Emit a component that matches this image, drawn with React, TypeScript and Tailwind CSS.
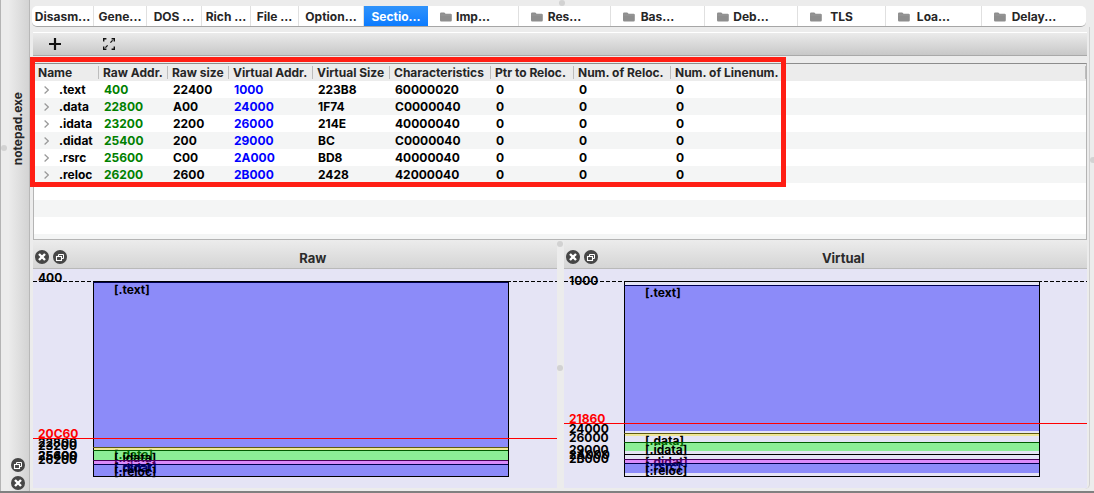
import React from "react";

type Tab = { label: string; folder?: boolean; active?: boolean };

const tabs: Tab[] = [
  { label: "Disasm..." },
  { label: "Gene..." },
  { label: "DOS ..." },
  { label: "Rich ..." },
  { label: "File ..." },
  { label: "Option..." },
  { label: "Sectio...", active: true },
  { label: "Imp...", folder: true },
  { label: "Res...", folder: true },
  { label: "Bas...", folder: true },
  { label: "Deb...", folder: true },
  { label: "TLS", folder: true },
  { label: "Loa...", folder: true },
  { label: "Delay...", folder: true },
];

const columns = [
  { title: "Name", width: "w-[65px]" },
  { title: "Raw Addr.", width: "w-[69px]" },
  { title: "Raw size", width: "w-[61px]" },
  { title: "Virtual Addr.", width: "w-[84px]" },
  { title: "Virtual Size", width: "w-[77px]" },
  { title: "Characteristics", width: "w-[101px]" },
  { title: "Ptr to Reloc.", width: "w-[83px]" },
  { title: "Num. of Reloc.", width: "w-[97px]" },
  { title: "Num. of Linenum.", width: "" },
];

const rows = [
  [".text", "400", "22400", "1000", "223B8", "60000020", "0", "0", "0"],
  [".data", "22800", "A00", "24000", "1F74", "C0000040", "0", "0", "0"],
  [".idata", "23200", "2200", "26000", "214E", "40000040", "0", "0", "0"],
  [".didat", "25400", "200", "29000", "BC", "C0000040", "0", "0", "0"],
  [".rsrc", "25600", "C00", "2A000", "BD8", "40000040", "0", "0", "0"],
  [".reloc", "26200", "2600", "2B000", "2428", "42000040", "0", "0", "0"],
];

const BLUE = "#0000ff";
const YELLOW = "#ffee00";
const GREEN = "#00ff00";
const MAGENTA = "#c800ff";

type Band = { name: string; address: string; y: number; size: number; color: string; line: string };

const rawBands: Band[] = [
  { name: ".text", address: "400", y: 13, size: 165, color: BLUE, line: "#000050" },
  { name: ".data", address: "22800", y: 178, size: 3, color: YELLOW, line: "#5f5a10" },
  { name: ".idata", address: "23200", y: 181, size: 10, color: GREEN, line: "#005a00" },
  { name: ".didat", address: "25400", y: 191, size: 1, color: BLUE, line: "#000050" },
  { name: ".rsrc", address: "25600", y: 191, size: 4, color: MAGENTA, line: "#46005a" },
  { name: ".reloc", address: "26200", y: 195, size: 12, color: BLUE, line: "#000050" },
];

const virtualBands: Band[] = [
  { name: ".text", address: "1000", y: 16, size: 146, color: BLUE, line: "#000050" },
  { name: ".data", address: "24000", y: 164, size: 3, color: YELLOW, line: "#5f5a10" },
  { name: ".idata", address: "26000", y: 173, size: 9, color: GREEN, line: "#005a00" },
  { name: ".didat", address: "29000", y: 185, size: 0, color: BLUE, line: "#000000" },
  { name: ".rsrc", address: "2A000", y: 190, size: 4, color: MAGENTA, line: "#46005a" },
  { name: ".reloc", address: "2B000", y: 194, size: 10, color: BLUE, line: "#000050" },
];

function FolderIcon() {
  return (
    <svg viewBox="0 0 12 10" className="h-[10px] w-3 shrink-0" aria-hidden="true">
      <path
        d="M0 1.8Q0 .6 1.2.6H4Q4.7.6 5.1 1.2L5.5 1.7H10.6Q11.8 1.7 11.8 2.9V8.2Q11.8 9.4 10.6 9.4H1.2Q0 9.4 0 8.2Z"
        fill="#8e8e8e"
      />
      <path d="M.4 3H11.4" stroke="#a3a3a3" strokeWidth=".6" />
    </svg>
  );
}

function CloseButton({ label }: { label: string }) {
  return (
    <button type="button" aria-label={label} className="block h-[14px] w-[14px]">
      <svg viewBox="0 0 14 14" className="h-[14px] w-[14px]">
        <circle cx="7" cy="7" r="7" fill="#464646" />
        <path d="M4 4 10 10M10 4 4 10" stroke="#fff" strokeWidth="2.4" />
      </svg>
    </button>
  );
}

function FloatButton({ label }: { label: string }) {
  return (
    <button type="button" aria-label={label} className="block h-[14px] w-[14px]">
      <svg viewBox="0 0 14 14" className="h-[14px] w-[14px]" fill="none">
        <circle cx="7" cy="7" r="7" fill="#464646" />
        <path d="M5.5 6V4.5H10.5V8.5H9" stroke="#fff" strokeWidth="1" />
        <rect x="3.5" y="6.5" width="5" height="4" stroke="#fff" strokeWidth="1.1" />
      </svg>
    </button>
  );
}

function Dot() {
  return <span className="block h-[6px] w-[6px] shrink-0 rounded-full bg-[#d2d2d2]" />;
}

function MemoryMap({
  title,
  bands,
  marker,
  markerY,
}: {
  title: string;
  bands: Band[];
  marker: string;
  markerY: number;
}) {
  return (
    <section className="flex min-w-0 flex-1 flex-col" aria-label={title}>
      <header className="flex h-[29px] items-center border-b border-[#b9b9b9] bg-linear-to-b from-[#ececec] to-[#d5d5d5] pt-[6px] pl-[2px]">
        <div className="flex w-[34px] gap-1">
          <CloseButton label={`Close ${title}`} />
          <FloatButton label={`Detach ${title}`} />
        </div>
        <h2 className="flex-1 pt-[2px] text-center text-[13px] leading-4 font-bold text-[#2b2b2b]">{title}</h2>
      </header>
      <svg
        className="block h-[219px] w-full bg-[#e5e4f5] text-[12px] font-bold"
        shapeRendering="crispEdges"
        role="img"
        aria-label={`${title} section layout`}
      >
        <line x1="0" x2="100%" y1="12.5" y2="12.5" stroke="#000" strokeDasharray="4 2" />
        <rect x="60.5" y="12.5" height="195" className="w-[calc(100%-109px)]" fill="#e5e4f5" stroke="#000" />
        {bands.map((b) => (
          <g key={b.name}>
            <rect x="61" y={b.y} height={b.size} className="w-[calc(100%-110px)]" fill={b.color} fillOpacity="0.39" />
            <rect x="60" y={b.y} height="1" className="w-[calc(100%-109px)]" fill={b.line} />
            <text x="81" y={b.y + 12} fill="#000">{`[${b.name}]`}</text>
            <text x="5" y={b.y} fill="#000">{b.address}</text>
          </g>
        ))}
        <line x1="0" x2="100%" y1={markerY + 0.5} y2={markerY + 0.5} stroke="#ff0000" />
        <text x="5" y={markerY} fill="#ff0000">{marker}</text>
      </svg>
    </section>
  );
}

function cellColor(column: number) {
  if (column === 1) return "text-[#008000]";
  if (column === 3) return "text-[#0000ff]";
  return "text-black";
}

export default function App() {
  return (
    <div className="flex min-h-screen border-b-2 border-[#808080] bg-[#ececec] font-['Inter','Liberation_Sans',sans-serif] text-[12px] font-bold text-[#262626]">
      <aside className="flex w-[30px] shrink-0 border-l border-[#b4b4b4]">
        <div className="flex w-2 flex-col pt-[145px]">
          <Dot />
        </div>
        <div className="flex flex-1 flex-col items-center border-r border-[#b8b8b8] bg-linear-to-r from-[#ebebeb] to-[#d3d3d3] pt-[92px] pr-[2px] pb-[1px]">
          <span className="rotate-180 text-[12px] leading-4 [writing-mode:vertical-rl]">notepad.exe</span>
          <div className="mt-auto flex flex-col gap-1">
            <FloatButton label="Detach notepad.exe" />
            <CloseButton label="Close notepad.exe" />
          </div>
        </div>
      </aside>

      <main className="flex min-w-0 flex-1 flex-col">
        <div className="flex h-[6px] justify-center">
          <Dot />
        </div>
        <nav
          role="tablist"
          className="mr-[8px] ml-[2px] grid h-[21px] grid-cols-[62fr_53fr_55fr_49fr_48fr_65fr_64fr_91fr_92fr_94fr_93fr_88fr_96fr_104fr] overflow-hidden rounded-[5px] border-b border-[#a6a6a6] bg-white"
        >
          {tabs.map((tab) => (
            <button
              key={tab.label}
              type="button"
              role="tab"
              aria-selected={!!tab.active}
              className={
                tab.active
                  ? "min-w-0 overflow-hidden bg-linear-to-b from-[#2f93fb] to-[#0a7bff] pt-[1px] text-center whitespace-nowrap text-white"
                  : "flex min-w-0 items-center justify-center overflow-hidden border-r border-[#e0e0e0] pt-[1px] whitespace-nowrap last:border-r-0"
              }
            >
              {tab.folder && (
                <span className="w-6 shrink-0 pl-3">
                  <FolderIcon />
                </span>
              )}
              <span className="flex-1 text-center">{tab.label}</span>
              {tab.folder && <span className="w-6 shrink-0" />}
            </button>
          ))}
        </nav>

        <div className="mr-1 flex flex-1 flex-col rounded-br-[5px] border-r border-[#d0d0d0] pr-[2px] pl-[3px]">
          <div className="mt-[5px] flex h-6 items-center gap-[42px] border-t border-b border-t-white border-b-[#a9a9a9] bg-linear-to-b from-[#ebebeb] to-[#c8c8c8] pl-4">
            <button type="button" aria-label="Add section" className="h-3 w-3">
              <svg viewBox="0 0 12 12" className="h-3 w-3">
                <path d="M6 0V12M0 6H12" stroke="#111" strokeWidth="2.2" />
              </svg>
            </button>
            <button type="button" aria-label="Expand view" className="h-3 w-3">
              <svg viewBox="0 0 12 12" className="h-3 w-3" fill="none" stroke="#111" strokeWidth="1.4">
                <path d="M.7 3.6V.7H3.4M8.6.7H11.3V3.6M11.3 8.4V11.3H8.6M3.4 11.3H.7V8.4" />
                <path d="M7.4 4.6 9.6 2.4M4.6 7.4 2.4 9.6" strokeWidth="1.3" />
              </svg>
            </button>
          </div>

          <div className="relative mt-[7px] h-[177px] border border-[#b4b4b4] border-t-[#8c8c8c] bg-[repeating-linear-gradient(to_bottom,#ffffff_0px,#ffffff_17px,#f4f5f5_17px,#f4f5f5_34px)] bg-[position:0_17px]">
            <table className="w-full table-fixed border-collapse">
              <thead>
                <tr className="h-[17px] bg-[#ececec]">
                  {columns.map((c) => (
                    <th key={c.title} scope="col" className={`${c.width} p-0 text-left font-bold whitespace-nowrap`}>
                      <div className="h-[13px] border-r border-[#bdbdbd] pl-1 leading-[13px]">{c.title}</div>
                    </th>
                  ))}
                </tr>
              </thead>
              <tbody>
                {rows.map((row) => (
                  <tr key={row[0]} className="h-[17px]">
                    {row.map((value, i) => (
                      <td key={i} className={`p-0 pl-[5px] leading-[17px] whitespace-nowrap ${cellColor(i)}`}>
                        {i === 0 ? (
                          <span className="flex items-center gap-[10px] pl-[5px]">
                            <svg viewBox="0 0 5 8" className="h-2 w-[5px]" fill="none" aria-hidden="true">
                              <path d="M.6.5 4.3 4 .6 7.5" stroke="#999" strokeWidth="1.2" />
                            </svg>
                            {value}
                          </span>
                        ) : (
                          value
                        )}
                      </td>
                    ))}
                  </tr>
                ))}
              </tbody>
            </table>
            <div className="pointer-events-none absolute -top-[7px] -left-1 h-[130px] w-[756px] border-[5px] border-[#ff1e14]" />
          </div>

          <div className="flex flex-1">
            <MemoryMap title="Raw" bands={rawBands} marker="20C60" markerY={169} />
            <div className="flex w-[7px] shrink-0 flex-col items-center gap-[118px] pt-[1px]">
              <Dot />
              <Dot />
            </div>
            <MemoryMap title="Virtual" bands={virtualBands} marker="21860" markerY={154} />
          </div>
        </div>
        <div className="h-[2px]" />
      </main>
      <div className="absolute top-[157px] right-0 w-1 overflow-hidden">
        <Dot />
      </div>
    </div>
  );
}
